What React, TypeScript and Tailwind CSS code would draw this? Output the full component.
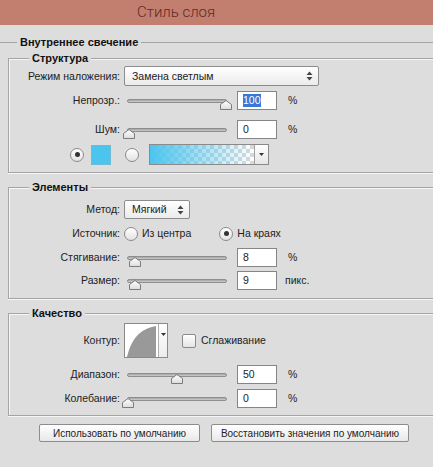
import React from 'react';

const panel = 'bg-[#dddddd]';

function Label({ children }: { children: React.ReactNode }) {
  return <div className="w-[111px] shrink-0 text-right">{children}</div>;
}

function Slider({ pos }: { pos: number }) {
  // pos is thumb centre offset in px from the start of the track
  return (
    <div className="relative ml-[3px] h-[19px] w-[100px] shrink-0">
      <div className="absolute left-0 right-0 top-[8px] h-[4px] rounded-full border border-[#8e8e8e] bg-gradient-to-b from-[#a2a2a2] to-[#cfcfcf]" />
      <svg
        className="absolute top-[9px]"
        style={{ left: pos - 6 }}
        width="12"
        height="10"
        viewBox="0 0 12 10"
      >
        <defs>
          <linearGradient id="thumb" x1="0" y1="0" x2="0" y2="1">
            <stop offset="0" stopColor="#ffffff" />
            <stop offset="1" stopColor="#dcdcdc" />
          </linearGradient>
        </defs>
        <path d="M6 0.5 L11.5 4.5 L11.5 9.5 L0.5 9.5 L0.5 4.5 Z" fill="url(#thumb)" stroke="#7b7b7b" />
      </svg>
    </div>
  );
}

function NumBox({ value, selected }: { value: string; selected?: boolean }) {
  return (
    <div className="ml-[6px] flex h-[19px] w-[40px] shrink-0 items-center border border-[#858585] bg-white pl-[5px]">
      {selected ? <span className="bg-[#3a78d6] leading-[13px] text-white">{value}</span> : value}
    </div>
  );
}

function Arrows() {
  return (
    <svg width="7" height="10" viewBox="0 0 7 10">
      <path d="M3.5 0.5 L6.5 4 L0.5 4 Z" fill="#444" />
      <path d="M3.5 9.5 L6.5 6 L0.5 6 Z" fill="#444" />
    </svg>
  );
}

function Select({ value, width, height }: { value: string; width: string; height: string }) {
  return (
    <div
      className={`flex ${width} ${height} items-center justify-between rounded-[2px] border border-[#8c8c8c] bg-gradient-to-b from-white to-[#ebebeb] pl-[7px] pr-[5px]`}
    >
      <span>{value}</span>
      <Arrows />
    </div>
  );
}

function Radio({ checked }: { checked?: boolean }) {
  return (
    <div className="flex h-[14px] w-[14px] shrink-0 items-center justify-center rounded-full border border-[#8a8a8a] bg-gradient-to-b from-white to-[#e2e2e2]">
      {checked && <div className="h-[5px] w-[5px] rounded-full bg-[#333]" />}
    </div>
  );
}

function Group({ title, children, className }: { title: string; children: React.ReactNode; className?: string }) {
  return (
    <fieldset
      className={`ml-[8px] border border-r-0 border-[#a4a4a4] shadow-[inset_1px_1px_0_#f6f6f6,0_1px_0_#f6f6f6] ${className ?? ''}`}
    >
      <legend className={`ml-[20px] px-[3px] text-[11px] leading-[13px] font-bold text-[#111] ${panel}`}>{title}</legend>
      {children}
    </fieldset>
  );
}

export default function App() {
  return (
    <div className={`h-[467px] w-[433px] overflow-hidden ${panel} font-['Liberation_Sans',Arial,sans-serif] text-[10.5px] leading-[13px] text-[#222]`}>
      {/* Title bar */}
      <div className="flex h-[25px] items-center bg-[#c27e6e] pl-[137px] font-['Roboto',sans-serif] text-[15px] font-light text-[#5c2c25]">
        Стиль слоя
      </div>

      <fieldset className="mt-[11px] border-t border-[#a4a4a4]">
        <legend className={`ml-[17px] px-[3px] text-[11px] leading-[13px] font-bold text-[#111] ${panel}`}>
          Внутреннее свечение
        </legend>

        {/* Structure */}
        <Group title="Структура" className="mt-[3px] pb-[7px] pt-[1px]">
          <div className="flex h-[20px] items-center gap-[4px]">
            <Label>Режим наложения:</Label>
            <Select value="Замена светлым" width="w-[195px]" height="h-[20px]" />
          </div>
          <div className="mt-[4px] flex h-[20px] items-center gap-[4px]">
            <Label>Непрозр.:</Label>
            <Slider pos={99} />
            <NumBox value="100" selected />
            <span className="ml-[7px]">%</span>
          </div>
          <div className="mt-[9px] flex h-[20px] items-center gap-[4px]">
            <Label>Шум:</Label>
            <Slider pos={2} />
            <NumBox value="0" />
            <span className="ml-[7px]">%</span>
          </div>
          <div className="mt-[5px] flex h-[21px] items-center">
            <div className="ml-[61px]">
              <Radio checked />
            </div>
            <div className="ml-[7px] h-[20px] w-[20px] border border-[#6fbbd6] bg-[#4cc5ee]" />
            <div className="ml-[14px]">
              <Radio />
            </div>
            <div className="ml-[10px] flex h-[21px] border border-[#8a8a8a]">
              <div className="h-full w-[104px] bg-[repeating-conic-gradient(#d9d9d9_0_25%,#ffffff_0_50%)] bg-[length:8px_8px]">
                <div className="h-full w-full bg-gradient-to-r from-[#4cc5ee] via-[#4cc5ee]/50 to-transparent" />
              </div>
              <div className="flex w-[14px] items-center justify-center border-l border-[#a0a0a0] bg-gradient-to-b from-white to-[#e6e6e6]">
                <svg width="5" height="3" viewBox="0 0 5 3">
                  <path d="M0 0 L5 0 L2.5 3 Z" fill="#333" />
                </svg>
              </div>
            </div>
          </div>
        </Group>

        {/* Elements */}
        <Group title="Элементы" className="mt-[8px] pb-[8px] pt-[6px]">
          <div className="flex h-[19px] items-center gap-[4px]">
            <Label>Метод:</Label>
            <Select value="Мягкий" width="w-[66px]" height="h-[19px]" />
          </div>
          <div className="mt-[5px] flex h-[19px] items-center gap-[4px]">
            <Label>Источник:</Label>
            <Radio />
            <span className="ml-[0px]">Из центра</span>
            <div className="ml-[24px]">
              <Radio checked />
            </div>
            <span>На краях</span>
          </div>
          <div className="mt-[4px] flex h-[20px] items-center gap-[4px]">
            <Label>Стягивание:</Label>
            <Slider pos={8} />
            <NumBox value="8" />
            <span className="ml-[7px]">%</span>
          </div>
          <div className="mt-[3px] flex h-[20px] items-center gap-[4px]">
            <Label>Размер:</Label>
            <Slider pos={8} />
            <NumBox value="9" />
            <span className="ml-[4px]">пикс.</span>
          </div>
        </Group>

        {/* Quality */}
        <Group title="Качество" className="mt-[8px] pb-[7px] pt-[3px]">
          <div className="flex h-[35px] items-center gap-[4px]">
            <Label>Контур:</Label>
            <div className="flex h-[35px] border border-[#8a8a8a] bg-white">
              <svg width="33" height="33" viewBox="0 0 33 33">
                <path d="M2 33 C6 16 14 5 31 2 L31 33 Z" fill="#999999" />
              </svg>
              <div className="flex w-[9px] justify-center border-l border-[#b0b0b0] bg-gradient-to-b from-white to-[#ececec] pt-[9px]">
                <svg width="5" height="3" viewBox="0 0 5 3">
                  <path d="M0 0 L5 0 L2.5 3 Z" fill="#333" />
                </svg>
              </div>
            </div>
            <div className="ml-[10px] h-[14px] w-[14px] rounded-[2px] border border-[#8a8a8a] bg-gradient-to-b from-white to-[#e4e4e4]" />
            <span className="ml-[1px]">Сглаживание</span>
          </div>
          <div className="mt-[6px] flex h-[20px] items-center gap-[4px]">
            <Label>Диапазон:</Label>
            <Slider pos={50} />
            <NumBox value="50" />
            <span className="ml-[7px]">%</span>
          </div>
          <div className="mt-[4px] flex h-[20px] items-center gap-[4px]">
            <Label>Колебание:</Label>
            <Slider pos={1} />
            <NumBox value="0" />
            <span className="ml-[7px]">%</span>
          </div>
        </Group>
      </fieldset>

      {/* Buttons */}
      <div className="mt-[8px] flex gap-[11px] pl-[39px]">
        <button className="h-[18px] w-[161px] whitespace-nowrap rounded-[2px] border border-[#8c8c8c] bg-gradient-to-b from-white to-[#e8e8e8] text-[10px] text-[#222]">
          Использовать по умолчанию
        </button>
        <button className="h-[18px] w-[198px] whitespace-nowrap rounded-[2px] border border-[#8c8c8c] bg-gradient-to-b from-white to-[#e8e8e8] text-[10px] text-[#222]">
          Восстановить значения по умолчанию
        </button>
      </div>
    </div>
  );
}
